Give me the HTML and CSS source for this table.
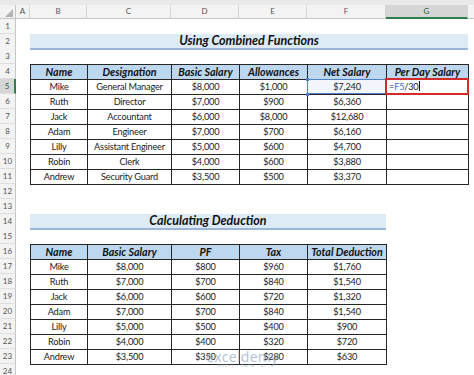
FILE: index.html
```html
<!DOCTYPE html>
<html>
<head>
<meta charset="utf-8">
<link rel="stylesheet" href="styles.css">
</head>
<body>
<div class="app">
  <div class="strip"></div>
  <div class="sheet">
    <div class="r chr">
      <div class="corner"><span class="tri"></span></div>
      <div class="ch">A</div><div class="ch">B</div><div class="ch">C</div><div class="ch">D</div><div class="ch">E</div><div class="ch">F</div><div class="ch sel">G</div><div class="ch last"></div>
    </div>
    <div class="r"><div class="rh">1</div></div>
    <div class="r"><div class="rh">2</div><span></span><div class="title t1">Using Combined Functions</div></div>
    <div class="r"><div class="rh">3</div></div>
    <div class="r"><div class="rh">4</div><span></span>
      <div class="c h">Name</div><div class="c h">Designation</div><div class="c h">Basic Salary</div><div class="c h">Allowances</div><div class="c h">Net Salary</div><div class="c h e">Per Day Salary</div>
    </div>
    <div class="r"><div class="rh rsel">5</div><span></span>
      <div class="c">Mike</div><div class="c">General Manager</div><div class="c">$8,000</div><div class="c">$1,000</div><div class="c ref">$7,240</div><div class="c e act">=<span class="blue">F5</span>/30<span class="caret"></span></div>
    </div>
    <div class="r"><div class="rh">6</div><span></span>
      <div class="c">Ruth</div><div class="c">Director</div><div class="c">$7,000</div><div class="c">$900</div><div class="c">$6,360</div><div class="c e"></div>
    </div>
    <div class="r"><div class="rh">7</div><span></span>
      <div class="c">Jack</div><div class="c">Accountant</div><div class="c">$6,000</div><div class="c">$8,000</div><div class="c">$12,680</div><div class="c e"></div>
    </div>
    <div class="r"><div class="rh">8</div><span></span>
      <div class="c">Adam</div><div class="c">Engineer</div><div class="c">$7,000</div><div class="c">$700</div><div class="c">$6,160</div><div class="c e"></div>
    </div>
    <div class="r"><div class="rh">9</div><span></span>
      <div class="c">Lilly</div><div class="c">Assistant Engineer</div><div class="c">$5,000</div><div class="c">$600</div><div class="c">$4,700</div><div class="c e"></div>
    </div>
    <div class="r"><div class="rh">10</div><span></span>
      <div class="c">Robin</div><div class="c">Clerk</div><div class="c">$4,000</div><div class="c">$600</div><div class="c">$3,880</div><div class="c e"></div>
    </div>
    <div class="r"><div class="rh">11</div><span></span>
      <div class="c b">Andrew</div><div class="c b">Security Guard</div><div class="c b">$3,500</div><div class="c b">$500</div><div class="c b">$3,370</div><div class="c eb"></div>
    </div>
    <div class="r"><div class="rh">12</div></div>
    <div class="r"><div class="rh">13</div></div>
    <div class="r"><div class="rh">14</div><span></span><div class="title t2">Calculating Deduction</div></div>
    <div class="r"><div class="rh">15</div></div>
    <div class="r"><div class="rh">16</div><span></span>
      <div class="c h">Name</div><div class="c h">Basic Salary</div><div class="c h">PF</div><div class="c h">Tax</div><div class="c h e">Total Deduction</div>
    </div>
    <div class="r"><div class="rh">17</div><span></span>
      <div class="c">Mike</div><div class="c">$8,000</div><div class="c">$800</div><div class="c">$960</div><div class="c e">$1,760</div>
    </div>
    <div class="r"><div class="rh">18</div><span></span>
      <div class="c">Ruth</div><div class="c">$7,000</div><div class="c">$700</div><div class="c">$840</div><div class="c e">$1,540</div>
    </div>
    <div class="r"><div class="rh">19</div><span></span>
      <div class="c">Jack</div><div class="c">$6,000</div><div class="c">$600</div><div class="c">$720</div><div class="c e">$1,320</div>
    </div>
    <div class="r"><div class="rh">20</div><span></span>
      <div class="c">Adam</div><div class="c">$7,000</div><div class="c">$700</div><div class="c">$840</div><div class="c e">$1,540</div>
    </div>
    <div class="r"><div class="rh">21</div><span></span>
      <div class="c">Lilly</div><div class="c">$5,000</div><div class="c">$500</div><div class="c">$400</div><div class="c e">$900</div>
    </div>
    <div class="r"><div class="rh">22</div><span></span>
      <div class="c">Robin</div><div class="c">$4,000</div><div class="c">$400</div><div class="c">$320</div><div class="c e">$720</div>
    </div>
    <div class="r"><div class="rh">23</div><span></span>
      <div class="c b">Andrew</div><div class="c b">$3,500</div><div class="c b">$350</div><div class="c b">$280</div><div class="c eb">$630</div>
    </div>
    <div class="r"><div class="rh">24</div></div>
  </div>
  <div class="wm"><span class="wm-name">exceldemy</span><span class="wm-tag">EXCEL · DATA · BI</span></div>
</div>
</body>
</html>
```

FILE: styles.css
```css
* { box-sizing: border-box; margin: 0; padding: 0; }
html, body { width: 474px; height: 375px; overflow: hidden; background: #fff; }
body { font-family: Lato, "Open Sans", sans-serif; color: #222; }
.app { position: relative; width: 474px; height: 375px; overflow: hidden; }
.strip { height: 5px; background: #e9e9e9; }
.sheet { display: flex; flex-direction: column; }
.r {
  display: grid;
  grid-template-columns: 16px 14px 57px 84px 68px 68px 79px 82px 1fr;
  height: 15px;
}
.chr { height: 14px; background: #f3f3f3; border-bottom: 1px solid #c6c6c6; }
.corner { position: relative; border-right: 1px solid #c6c6c6; }
.tri {
  position: absolute; right: 2px; bottom: 2px;
  width: 0; height: 0;
  border-left: 8px solid transparent;
  border-bottom: 8px solid #b4b4b4;
}
.ch {
  border-right: 1px solid #d4d4d4;
  font-size: 8px; line-height: 13px; text-align: center; color: #555;
}
.ch.sel { background: #d6d6d6; border-bottom: 2px solid #2e7d4f; color: #1e5f3a; line-height: 12px; }
.ch.last { border-right: none; }
.rh {
  background: #f3f3f3;
  border-right: 1px solid #c6c6c6;
  border-bottom: 1px solid #dedede;
  font-size: 8px; line-height: 14px; text-align: center; color: #555;
}
.rh.rsel { background: #d6d6d6; color: #1e5f3a; border-right: 2px solid #2e7d4f; }
.title {
  background: #ddebf7;
  border-bottom: 2px solid #9db5d8;
  font-weight: 700; font-style: italic; font-size: 12.5px; line-height: 14px;
  text-align: center; color: #111;
}
.t1 { grid-column: 3 / 9; }
.t2 { grid-column: 3 / 8; }
.c {
  border-left: 1px solid #262626;
  border-top: 1px solid #262626;
  font-size: 9.2px; letter-spacing: -0.2px; line-height: 14px; text-align: center;
  white-space: nowrap; overflow: visible;
}
.c.h { background: #bdd7ee; font-weight: 700; font-style: italic; font-size: 10.7px; letter-spacing: 0; color: #111; }
.c.e { box-shadow: 1px 0 0 #262626; }
.c.b { box-shadow: 0 1px 0 #262626; }
.c.eb { box-shadow: 1px 0 0 #262626, 0 1px 0 #262626, 1px 1px 0 #262626; }
.c.ref {
  position: relative;
  background: #f2f6fc;
  outline: 1px solid #4f7fc9; outline-offset: -1px;
}
.c.ref::before, .c.ref::after {
  content: ""; position: absolute; left: -2px; width: 3px; height: 3px; background: #4f7fc9;
}
.c.ref::before { top: -2px; }
.c.ref::after { bottom: -2px; }
.c.act {
  text-align: left; padding-left: 2px;
  outline: 2px solid #d42a2a; outline-offset: -1px;
  position: relative; z-index: 2;
}
.blue { color: #3a6fd0; }
.caret { display: inline-block; width: 1px; height: 10px; background: #111; vertical-align: -1px; margin-left: 1px; }
.wm {
  position: absolute; left: 206px; top: 350px;
  display: flex; flex-direction: column; align-items: center;
  color: #8fa8c8; opacity: 0.7; pointer-events: none;
}
.wm-name { font-size: 14px; line-height: 13px; letter-spacing: 0.3px; font-family: "Open Sans", sans-serif; }
.wm-tag { font-size: 4px; line-height: 5px; letter-spacing: 1px; }
```
